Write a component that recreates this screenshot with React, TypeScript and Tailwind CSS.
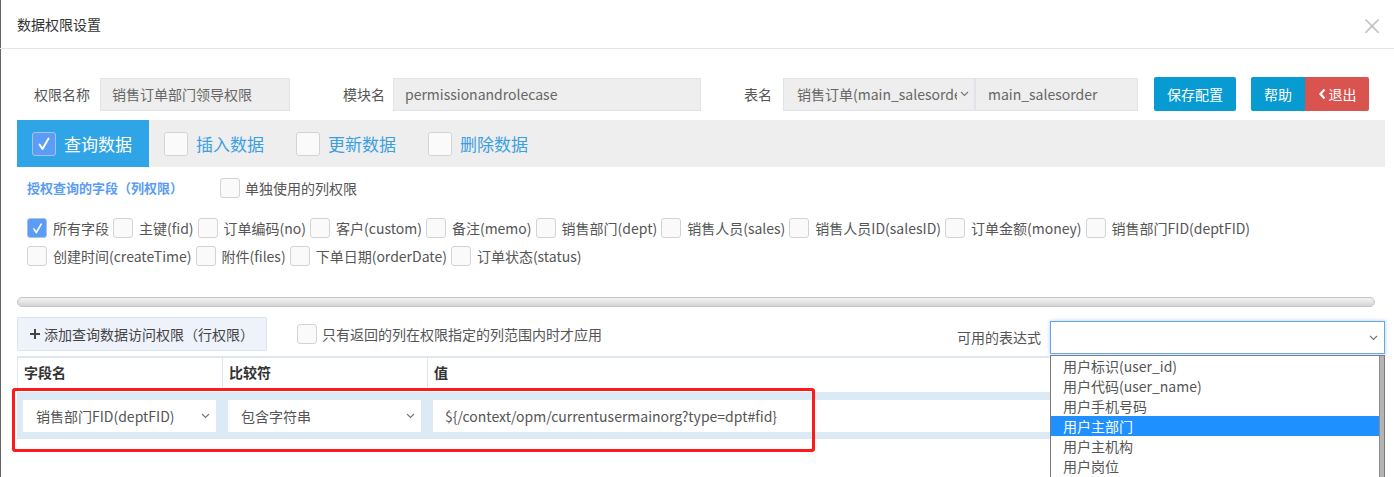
import React from 'react';

type BoxProps = { checked?: boolean; big?: boolean };

const Box: React.FC<BoxProps> = ({ checked = false, big = false }) => {
    const size = big ? 'w-6 h-6' : 'w-5 h-5';
    if (checked) {
        return (
            <span className={`${size} shrink-0 rounded-[3px] border border-[#a7c3ec] bg-[#5b9cf6] flex items-center justify-center`}>
                <svg width={big ? 16 : 13} height={big ? 16 : 13} viewBox="0 0 16 16" fill="none">
                    <path d="M3.5 8.5L6.5 13L12.5 2.5" stroke="white" strokeWidth="2" strokeLinecap="round" strokeLinejoin="round" />
                </svg>
            </span>
        );
    }
    return <span className={`${size} shrink-0 rounded-[3px] border border-[#d3d3d3] bg-[#fafafa]`} />;
};

const Chevron: React.FC = () => (
    <svg width="9" height="6" viewBox="0 0 9 6" fill="none" className="shrink-0">
        <path d="M1 1L4.5 4.5L8 1" stroke="#7a7a7a" strokeWidth="1.2" />
    </svg>
);

const tabs = ['查询数据', '插入数据', '更新数据', '删除数据'];

const fieldsRow1 = [
    '所有字段',
    '主键(fid)',
    '订单编码(no)',
    '客户(custom)',
    '备注(memo)',
    '销售部门(dept)',
    '销售人员(sales)',
    '销售人员ID(salesID)',
    '订单金额(money)',
    '销售部门FID(deptFID)',
];
const fieldsRow2 = ['创建时间(createTime)', '附件(files)', '下单日期(orderDate)', '订单状态(status)'];

const expressions = ['用户标识(user_id)', '用户代码(user_name)', '用户手机号码', '用户主部门', '用户主机构', '用户岗位'];

export default function App() {
    return (
        <div className="relative w-[1394px] h-[477px] overflow-hidden bg-white shadow-[inset_1px_0_0_#666] font-['Noto_Sans_CJK_SC','Noto_Sans',sans-serif] text-[14px] text-[#555]">
            {/* header */}
            <div className="flex h-[49px] items-center justify-between border-b border-[#e5e5e5] pl-[17px] pr-[11px]">
                <span className="text-[14px] text-[#333]">数据权限设置</span>
                <span className="text-[22px] leading-none text-[#c2c2c2]">×</span>
            </div>

            {/* basic info */}
            <div className="mt-[28px] flex h-[34px] items-center pl-[17px]">
                <span className="w-[83px] pr-[10px] text-right">权限名称</span>
                <div className="flex h-[33px] w-[190px] items-center border border-[#e0e4ea] bg-[#eeeeee] px-[11px] text-[#666]">销售订单部门领导权限</div>
                <span className="w-[103px] pr-[8px] text-right">模块名</span>
                <div className="flex h-[33px] w-[308px] items-center border border-[#e0e4ea] bg-[#eeeeee] px-[11px] text-[#666]">permissionandrolecase</div>
                <span className="w-[82px] pr-[11px] text-right">表名</span>
                <div className="flex h-[33px] w-[192px] items-center gap-[3px] border border-[#e0e4ea] bg-[#eeeeee] pl-[13px] pr-[5px] text-[#666]">
                    <span className="flex-1 overflow-hidden whitespace-nowrap">销售订单(main_salesorde</span>
                    <Chevron />
                </div>
                <div className="flex h-[33px] w-[163px] items-center border border-[#e0e4ea] bg-[#eeeeee] px-[12px] text-[#666]">main_salesorder</div>
                <button className="ml-[16px] h-[34px] w-[82px] rounded-[2px] bg-[#079bd2] text-white">保存配置</button>
                <button className="ml-[15px] h-[34px] w-[54px] rounded-l-[2px] bg-[#079bd2] text-white">帮助</button>
                <button className="flex h-[34px] w-[64px] items-center justify-center gap-[2px] rounded-r-[2px] bg-[#d9534f] text-white">
                    <svg width="9" height="12" viewBox="0 0 9 12" fill="none">
                        <path d="M6.5 1.5L2.5 6L6.5 10.5" stroke="white" strokeWidth="2.2" />
                    </svg>
                    退出
                </button>
            </div>

            {/* tabs */}
            <div className="ml-[17px] mt-[9px] flex h-[47px] w-[1368px] bg-[#eeeeee]">
                {tabs.map((t, i) => (
                    <div
                        key={t}
                        className={`flex w-[132px] items-center gap-[8px] pl-[15px] text-[17px] ${i === 0 ? 'bg-[#2fa4e7] text-white' : 'text-[#3a9fe3]'}`}
                    >
                        <Box big checked={i === 0} />
                        <span>{t}</span>
                    </div>
                ))}
            </div>

            {/* column permission */}
            <div className="mt-[11px] flex h-[20px] items-center pl-[27px]">
                <span className="w-[193px] text-[13px] font-bold text-[#5a9cf3]">授权查询的字段（列权限）</span>
                <Box />
                <span className="ml-[5px]">单独使用的列权限</span>
            </div>

            <div className="mt-[20px] flex h-[20px] items-center gap-[4px] pl-[27px]">
                {fieldsRow1.map((f, i) => (
                    <div key={f} className="flex items-center gap-[6px] whitespace-nowrap">
                        <Box checked={i === 0} />
                        <span>{f}</span>
                    </div>
                ))}
            </div>
            <div className="mt-[8px] flex h-[20px] items-center gap-[4px] pl-[27px]">
                {fieldsRow2.map(f => (
                    <div key={f} className="flex items-center gap-[6px] whitespace-nowrap">
                        <Box />
                        <span>{f}</span>
                    </div>
                ))}
            </div>

            {/* scrollbar */}
            <div className="ml-[17px] mt-[31px] h-[10px] w-[1358px] rounded-full border border-[#c4c4c4] bg-gradient-to-b from-[#f3f3f3] to-[#d5d5d5]" />

            {/* row permission actions */}
            <div className="ml-[17px] mt-[10px] flex w-[1368px] items-start">
                <button className="flex h-[34px] w-[250px] items-center gap-[3px] rounded-[2px] border border-[#dce4ee] bg-[#eef3fb] pl-[11px] text-[#444]">
                    <svg width="12" height="12" viewBox="0 0 12 12">
                        <path d="M6 1V11M1 6H11" stroke="#444" strokeWidth="2" />
                    </svg>
                    <span>添加查询数据访问权限（行权限）</span>
                </button>
                <div className="ml-[30px] flex h-[34px] items-center gap-[5px]">
                    <Box />
                    <span>只有返回的列在权限指定的列范围内时才应用</span>
                </div>
                <div className="ml-auto mt-[4px] flex items-center gap-[9px]">
                    <span>可用的表达式</span>
                    <div className="relative w-[335px]">
                        <div className="flex h-[33px] items-center justify-end border border-[#66a6e9] bg-white pr-[6px] shadow-[0_0_4px_rgba(102,166,233,0.55)]">
                            <Chevron />
                        </div>
                        <div className="absolute left-0 top-[34px] z-10 flex h-[140px] w-full border border-[#7a7a7a] bg-white">
                            <div className="flex-1">
                                {expressions.map(e => (
                                    <div
                                        key={e}
                                        className={`h-[20px] pl-[12px] leading-[20px] ${e === '用户主部门' ? 'bg-[#1e90ff] text-white' : 'text-[#555]'}`}
                                    >
                                        {e}
                                    </div>
                                ))}
                            </div>
                            <div className="w-[5px] border-l border-[#8c8c8c] bg-[#b4b4b4]" />
                        </div>
                    </div>
                </div>
            </div>

            {/* condition table */}
            <div className="relative ml-[17px] mt-[2px] w-[1368px]">
                <div className="flex h-[36px] border-l border-t-2 border-[#dfe8f1] bg-white pb-[5px] font-bold text-[#333]">
                    <div className="flex w-[205px] items-center border-r border-[#dde5ee] pl-[6px]">字段名</div>
                    <div className="flex w-[205px] items-center border-r border-[#dde5ee] pl-[6px]">比较符</div>
                    <div className="flex flex-1 items-center pl-[6px]">值</div>
                </div>
                <div className="flex h-[46px] bg-[#dbeaf5] pt-[8px]">
                    <div className="w-[205px] px-[6px]">
                        <div className="flex h-[32px] items-center justify-between bg-white pl-[13px] pr-[6px] text-[#555]">
                            <span>销售部门FID(deptFID)</span>
                            <Chevron />
                        </div>
                    </div>
                    <div className="w-[205px] px-[6px]">
                        <div className="flex h-[32px] items-center justify-between bg-white pl-[13px] pr-[6px] text-[#555]">
                            <span>包含字符串</span>
                            <Chevron />
                        </div>
                    </div>
                    <div className="flex-1 px-[6px]">
                        <div className="flex h-[32px] items-center bg-white pl-[12px] text-[#555]">{'${/context/opm/currentusermainorg?type=dpt#fid}'}</div>
                    </div>
                </div>
                <div className="h-[1px] bg-[#dfe8f1]" />
                {/* highlight annotation */}
                <div className="absolute left-[-5px] top-[32px] h-[64px] w-[803px] rounded-[3px] border-[3px] border-[#ff1a1a]" />
            </div>
        </div>
    );
}
